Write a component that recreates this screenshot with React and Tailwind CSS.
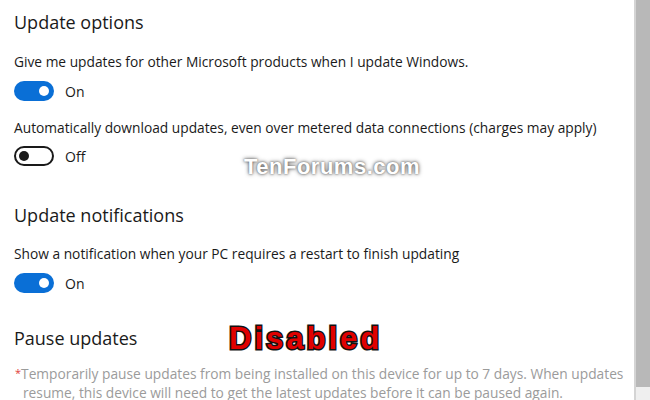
const font = { fontFamily: '"Open Sans", "Noto Sans", sans-serif' }

function Toggle({ on }) {
  return (
    <div className="flex h-5 items-center gap-[11px]">
      {on ? (
        <div className="flex h-5 w-10 items-center justify-end rounded-full bg-[#0a6fd6] pr-[5px]">
          <div className="h-[10px] w-[10px] rounded-full bg-white" />
        </div>
      ) : (
        <div className="flex h-5 w-10 items-center rounded-full border-2 border-[#1a1a1a] pl-[3px]">
          <div className="h-[10px] w-[10px] rounded-full bg-[#1a1a1a]" />
        </div>
      )}
      <span className="text-[14px] text-[#1a1a1a]">{on ? 'On' : 'Off'}</span>
    </div>
  )
}

function Heading({ children, className = '' }) {
  return (
    <h2 className={`h-7 text-[18px] leading-7 font-normal text-[#1a1a1a] ${className}`}>{children}</h2>
  )
}

function Label({ children, className = '' }) {
  return <p className={`h-5 text-[13.75px] leading-5 text-[#1a1a1a] ${className}`}>{children}</p>
}

export default function App() {
  return (
    <div className="relative flex h-[400px] w-[650px] overflow-hidden bg-white" style={font}>
      {/* Settings content */}
      <div className="flex flex-1 flex-col pl-[14px] pt-2">
        <Heading>Update options</Heading>
        <Label className="mt-4">Give me updates for other Microsoft products when I update Windows.</Label>
        <div className="mt-[9px]">
          <Toggle on />
        </div>
        <Label className="mt-[17px]">Automatically download updates, even over metered data connections (charges may apply)</Label>
        <div className="mt-2">
          <Toggle on={false} />
        </div>

        <Heading className="mt-[35px]">Update notifications</Heading>
        <Label className="mt-[15px]">Show a notification when your PC requires a restart to finish updating</Label>
        <div className="mt-[9px]">
          <Toggle on />
        </div>

        <Heading className="mt-[31px]">Pause updates</Heading>
        <p className="mt-[11px] pl-[9px] -indent-[8px] text-[13.75px] leading-[19px] text-[#9b9b9b]">
          <span className="align-[2px] text-[11px] text-[#e0403a]">*</span>
          Temporarily pause updates from being installed on this device for up to 7 days. When updates resume, this device will need to get the latest updates before it can be paused again.
        </p>
      </div>

      {/* Scrollbar */}
      <div className="flex w-4 flex-col border-l-2 border-[#d4d4d4]">
        <div className="flex-1 bg-[#b8b8b8]" />
        <div className="h-[13px] bg-[#efefef]" />
      </div>

      {/* Watermark */}
      <div
        className="absolute left-[244px] top-[150px] text-[22px] font-bold tracking-[0.5px] text-white [text-shadow:0_0_4px_#555,0_0_2px_#777]"
        style={{ fontFamily: '"Liberation Sans", Arial, sans-serif' }}
      >
        TenForums.com
      </div>

      {/* Annotation */}
      <div
        className="absolute left-[229px] top-[316px] text-[31px] font-black tracking-[3px] text-[#e00000] [-webkit-text-stroke:3px_#111] [paint-order:stroke_fill]"
        style={{ fontFamily: '"Liberation Sans", Arial, sans-serif' }}
      >
        Disabled
      </div>
    </div>
  )
}
